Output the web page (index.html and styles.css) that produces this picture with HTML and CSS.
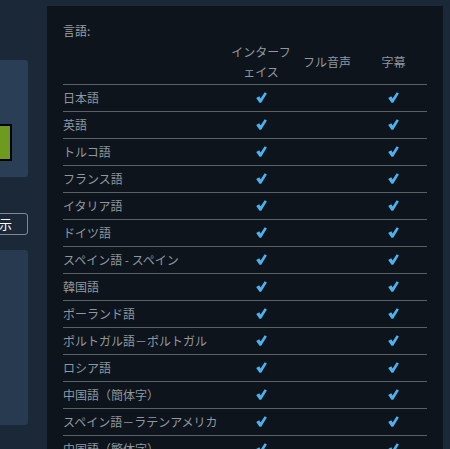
FILE: index.html
```html
<!DOCTYPE html>
<html lang="ja">
<head>
<meta charset="utf-8">
<link rel="stylesheet" href="styles.css">
</head>
<body>
<div class="page">
  <aside class="side">
    <div class="card card-top">
      <div class="buy-btn"></div>
    </div>
    <button class="outline-btn">すべて表示</button>
    <div class="card card-bottom"></div>
  </aside>
  <section class="panel">
    <div class="panel-title">言語:</div>
    <table class="langs">
      <colgroup>
        <col class="c-name"><col class="c-opt"><col class="c-opt"><col class="c-opt-last">
      </colgroup>
      <thead>
        <tr><th></th><th>インターフェイス</th><th>フル音声</th><th>字幕</th></tr>
      </thead>
      <tbody id="rows"></tbody>
    </table>
  </section>
</div>
<script>
  var langs = ["日本語","英語","トルコ語","フランス語","イタリア語","ドイツ語","スペイン語 - スペイン","韓国語","ポーランド語","ポルトガル語－ポルトガル","ロシア語","中国語（簡体字）","スペイン語－ラテンアメリカ","中国語（繁体字）"];
  var check = '<svg class="chk" width="11" height="11" viewBox="0 0 11 11"><path d="M0.2 6.0 L3.3 4.3 L4.6 6.6 L8.7 0.2 L10.9 1.6 L5.2 10.8 L3.5 10.8 Z" fill="#4cb2ef"/></svg>';
  var html = "";
  langs.forEach(function (l) {
    html += '<tr><td class="name">' + l + '</td><td>' + check + '</td><td></td><td>' + check + '</td></tr>';
  });
  document.getElementById("rows").innerHTML = html;
</script>
</body>
</html>
```

FILE: styles.css
```css
html, body {
  margin: 0;
  padding: 0;
  background: #1b2838;
  height: 100%;
  overflow: hidden;
}

body {
  font-family: "Noto Sans CJK JP", "Liberation Sans", sans-serif;
}

.page {
  display: flex;
  align-items: flex-start;
  gap: 19px;
}

.side {
  width: 128px;
  margin-left: -100px;
  flex: none;
  display: flex;
  flex-direction: column;
  padding-top: 60px;
}

.card {
  background: #2a3e55;
  border-radius: 3px;
}

.card-top {
  height: 117px;
  box-sizing: border-box;
  padding-top: 64px;
  padding-right: 16px;
  display: flex;
  justify-content: flex-end;
}

.buy-btn {
  width: 60px;
  height: 37px;
  box-sizing: border-box;
  background: #6c9b1f;
  border: 2px solid #000;
}

.outline-btn {
  margin-top: 36px;
  height: 22px;
  box-sizing: border-box;
  background: transparent;
  border: 1px solid #7d8a96;
  border-radius: 3px;
  color: #ffffff;
  font-family: "Noto Sans CJK JP", sans-serif;
  font-size: 13px;
  line-height: 18px;
  padding: 0 15px 0 0;
  text-align: right;
}

.card-bottom {
  margin-top: 15px;
  height: 175px;
  background: #283a50;
}

.panel {
  width: 396px;
  flex: none;
  margin-top: 6px;
  min-height: 460px;
  box-sizing: border-box;
  background: #0e141b;
  padding: 16px;
}

.panel-title {
  color: #9aa1a8;
  font-size: 12px;
  line-height: 18px;
}

.langs {
  width: 364px;
  table-layout: fixed;
  border-collapse: collapse;
  font-size: 12px;
  color: #8f98a0;
}

.c-name { width: 165px; }
.c-opt { width: 66px; }
.c-opt-last { width: 67px; }

.langs th {
  font-weight: normal;
  text-align: center;
  vertical-align: middle;
  line-height: 20px;
  height: 44px;
  padding: 0;
  border-bottom: 1px solid #5a5f64;
  box-sizing: border-box;
}

.langs td {
  height: 26px;
  padding: 0;
  text-align: center;
  vertical-align: middle;
  border-bottom: 1px solid #5a5f64;
  line-height: 18px;
}

.langs td.name {
  text-align: left;
  white-space: nowrap;
}

.chk {
  display: block;
  margin: 0 auto;
}
```
